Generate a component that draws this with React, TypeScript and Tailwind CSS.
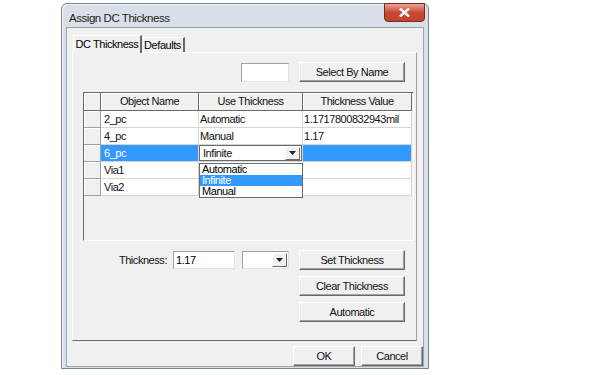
import React from "react";

const font = { fontFamily: '"Liberation Sans", Arial, sans-serif', letterSpacing: "-0.45px" };

function Btn({ label, className = "" }: { label: string; className?: string }) {
  return (
    <div
      className={
        "flex items-center justify-center bg-[#f0f0f0] text-[11px] text-[#111] border border-t-white border-l-white border-r-[#696969] border-b-[#696969] shadow-[inset_-1px_-1px_0_#a0a0a0] " +
        className
      }
    >
      {label}
    </div>
  );
}

function Arrow() {
  return (
    <svg width="7" height="4" viewBox="0 0 7 4">
      <path d="M0 0h7L3.5 4z" fill="#222" />
    </svg>
  );
}

export default function App() {
  const rows = [
    ["2_pc", "Automatic", "1.1717800832943mil"],
    ["4_pc", "Manual", "1.17"],
    ["6_pc", "", ""],
    ["Via1", "", ""],
    ["Via2", "", ""],
  ];
  return (
    <div className="w-[600px] h-[375px] bg-white relative overflow-hidden" style={font}>
      <div className="absolute left-[61px] top-[3px] w-[368px] h-[366px] rounded-t-[6px] border border-[#7b8592] bg-[#d9dfe6] flex flex-col px-[4px] pb-[4px] shadow-[inset_1px_1px_0_#f2f4f7]">
        <div className="h-[23px] flex items-start relative">
          <div className="text-[11.5px] text-[#1e1e1e] mt-[6px] ml-[3px]">Assign DC Thickness</div>
          <div className="absolute right-[-1px] -top-[1px] w-[41px] h-[19px] rounded-b-[4px] border border-[#7a2a20] bg-gradient-to-b from-[#e8a293] via-[#c9482f] to-[#c0442b] flex items-center justify-center">
            <svg width="11" height="9" viewBox="0 0 11 9">
              <path d="M1 0.5 L10 8.5 M10 0.5 L1 8.5" stroke="#fff" strokeWidth="2.4" />
              <path d="M1 0.5 L10 8.5 M10 0.5 L1 8.5" stroke="#f7f7f7" strokeWidth="1.4" />
            </svg>
          </div>
        </div>
        <div className="flex-1 bg-[#f0f0f0] border border-[#9aa5b2] flex flex-col relative">
          {/* tabs */}
          <div className="flex items-end ml-[6px] mt-[7px] h-[17px] relative z-10">
            <div className="h-[18px] bg-[#f0f0f0] border-l border-t border-white border-r-2 border-r-[#696969] text-[11px] flex items-center justify-center -mb-[1px] w-[69px] whitespace-nowrap">
              DC Thickness
            </div>
            <div className="h-[15px] w-[43px] border-t border-white border-r-2 border-r-[#696969] text-[11px] flex items-center justify-center whitespace-nowrap">
              Defaults
            </div>
          </div>
          {/* panel */}
          <div className="ml-[5px] w-[345px] h-[289px] border border-l-white border-t-white border-r-[#a0a0a0] border-b-[#696969] flex flex-col">
            <div className="flex items-center mt-[9px] ml-[168px] h-[20px]">
              <div className="w-[48px] h-[19px] bg-white border border-t-[#a0a0a0] border-l-[#a0a0a0] border-b-[#e3e3e3] border-r-[#e3e3e3]" />
              <Btn label="Select By Name" className="ml-[10px] w-[106px] h-[20px]" />
            </div>
            {/* grid */}
            <div className="mt-[10px] ml-[10px] w-[331px] h-[149px] bg-[#f0f0f0] border border-t-[#6a6a6a] border-l-[#6a6a6a] border-b-white border-r-white relative">
              <div className="flex flex-col text-[11px] text-[#111]">
                <div className="flex h-[18px]">
                  <div className="w-[17px] border-r border-b border-[#6a6a6a] shadow-[inset_1px_1px_0_#fff]" />
                  <div className="w-[98px] border-r border-b border-[#6a6a6a] flex items-center justify-center shadow-[inset_1px_1px_0_#fff]">Object Name</div>
                  <div className="w-[104px] border-r border-b border-[#6a6a6a] flex items-center justify-center shadow-[inset_1px_1px_0_#fff]">Use Thickness</div>
                  <div className="w-[109px] border-r border-b border-[#6a6a6a] flex items-center justify-center shadow-[inset_1px_1px_0_#fff]">Thickness Value</div>
                </div>
                {rows.map((r, i) => {
                  const sel = i === 2;
                  return (
                    <div key={i} className="flex h-[17px]">
                      <div className="w-[17px] border-r border-b border-[#a0a0a0] shadow-[inset_1px_1px_0_#fff]" />
                      <div className={"w-[98px] border-r border-b border-[#d5d5d5] flex items-center pl-[3px] " + (sel ? "bg-[#3399ff] text-white" : "bg-white")}>{r[0]}</div>
                      <div className="w-[104px] border-r border-b border-[#d5d5d5] flex items-center bg-white">
                        {sel ? (
                          <div className="w-full h-full flex items-center justify-between border border-[#6a6a6a] pl-[3px] pr-[1px]">
                            <span>Infinite</span>
                            <div className="w-[15px] h-[13px] flex items-center justify-center bg-[#f0f0f0] border border-t-white border-l-white border-r-[#696969] border-b-[#696969]">
                              <Arrow />
                            </div>
                          </div>
                        ) : (
                          <span className="pl-[1px]">{r[1]}</span>
                        )}
                      </div>
                      <div className={"w-[109px] border-r border-b border-[#d5d5d5] flex items-center pl-[1px] " + (sel ? "bg-[#3399ff]" : "bg-white")}>{r[2]}</div>
                    </div>
                  );
                })}
              </div>
              {/* dropdown list */}
              <div className="absolute left-[115px] top-[70px] w-[104px] h-[35px] bg-white border border-[#6a6a6a] text-[11px] flex flex-col z-20">
                <div className="h-[11px] leading-[11px] pl-[2px]">Automatic</div>
                <div className="h-[11px] leading-[11px] pl-[2px] bg-[#3399ff] text-white">Infinite</div>
                <div className="h-[11px] leading-[11px] pl-[2px]">Manual</div>
              </div>
            </div>
            {/* thickness row */}
            <div className="flex mt-[9px]">
              <div className="flex items-center justify-end h-[20px] w-[216px]">
                <span className="text-[11px] text-[#111]">Thickness:</span>
                <div className="ml-[6px] w-[62px] h-[18px] bg-white border border-t-[#a0a0a0] border-l-[#a0a0a0] border-b-[#e3e3e3] border-r-[#e3e3e3] text-[11px] flex items-center pl-[2px]">1.17</div>
                <div className="ml-[7px] w-[47px] h-[18px] bg-white border border-t-[#a0a0a0] border-l-[#a0a0a0] border-b-[#e3e3e3] border-r-[#e3e3e3] flex items-center justify-end pr-[1px]">
                  <div className="w-[15px] h-[14px] flex items-center justify-center bg-[#f0f0f0] border border-t-white border-l-white border-r-[#696969] border-b-[#696969]">
                    <Arrow />
                  </div>
                </div>
              </div>
              <div className="flex flex-col gap-[6px] ml-[10px]">
                <Btn label="Set Thickness" className="w-[106px] h-[20px]" />
                <Btn label="Clear Thickness" className="w-[106px] h-[20px]" />
                <Btn label="Automatic" className="w-[106px] h-[20px]" />
              </div>
            </div>
          </div>
          <div className="flex ml-[226px] mt-[5px]">
            <Btn label="OK" className="w-[64px] h-[20px]" />
            <Btn label="Cancel" className="ml-[6px] w-[64px] h-[20px]" />
          </div>
        </div>
      </div>
    </div>
  );
}
